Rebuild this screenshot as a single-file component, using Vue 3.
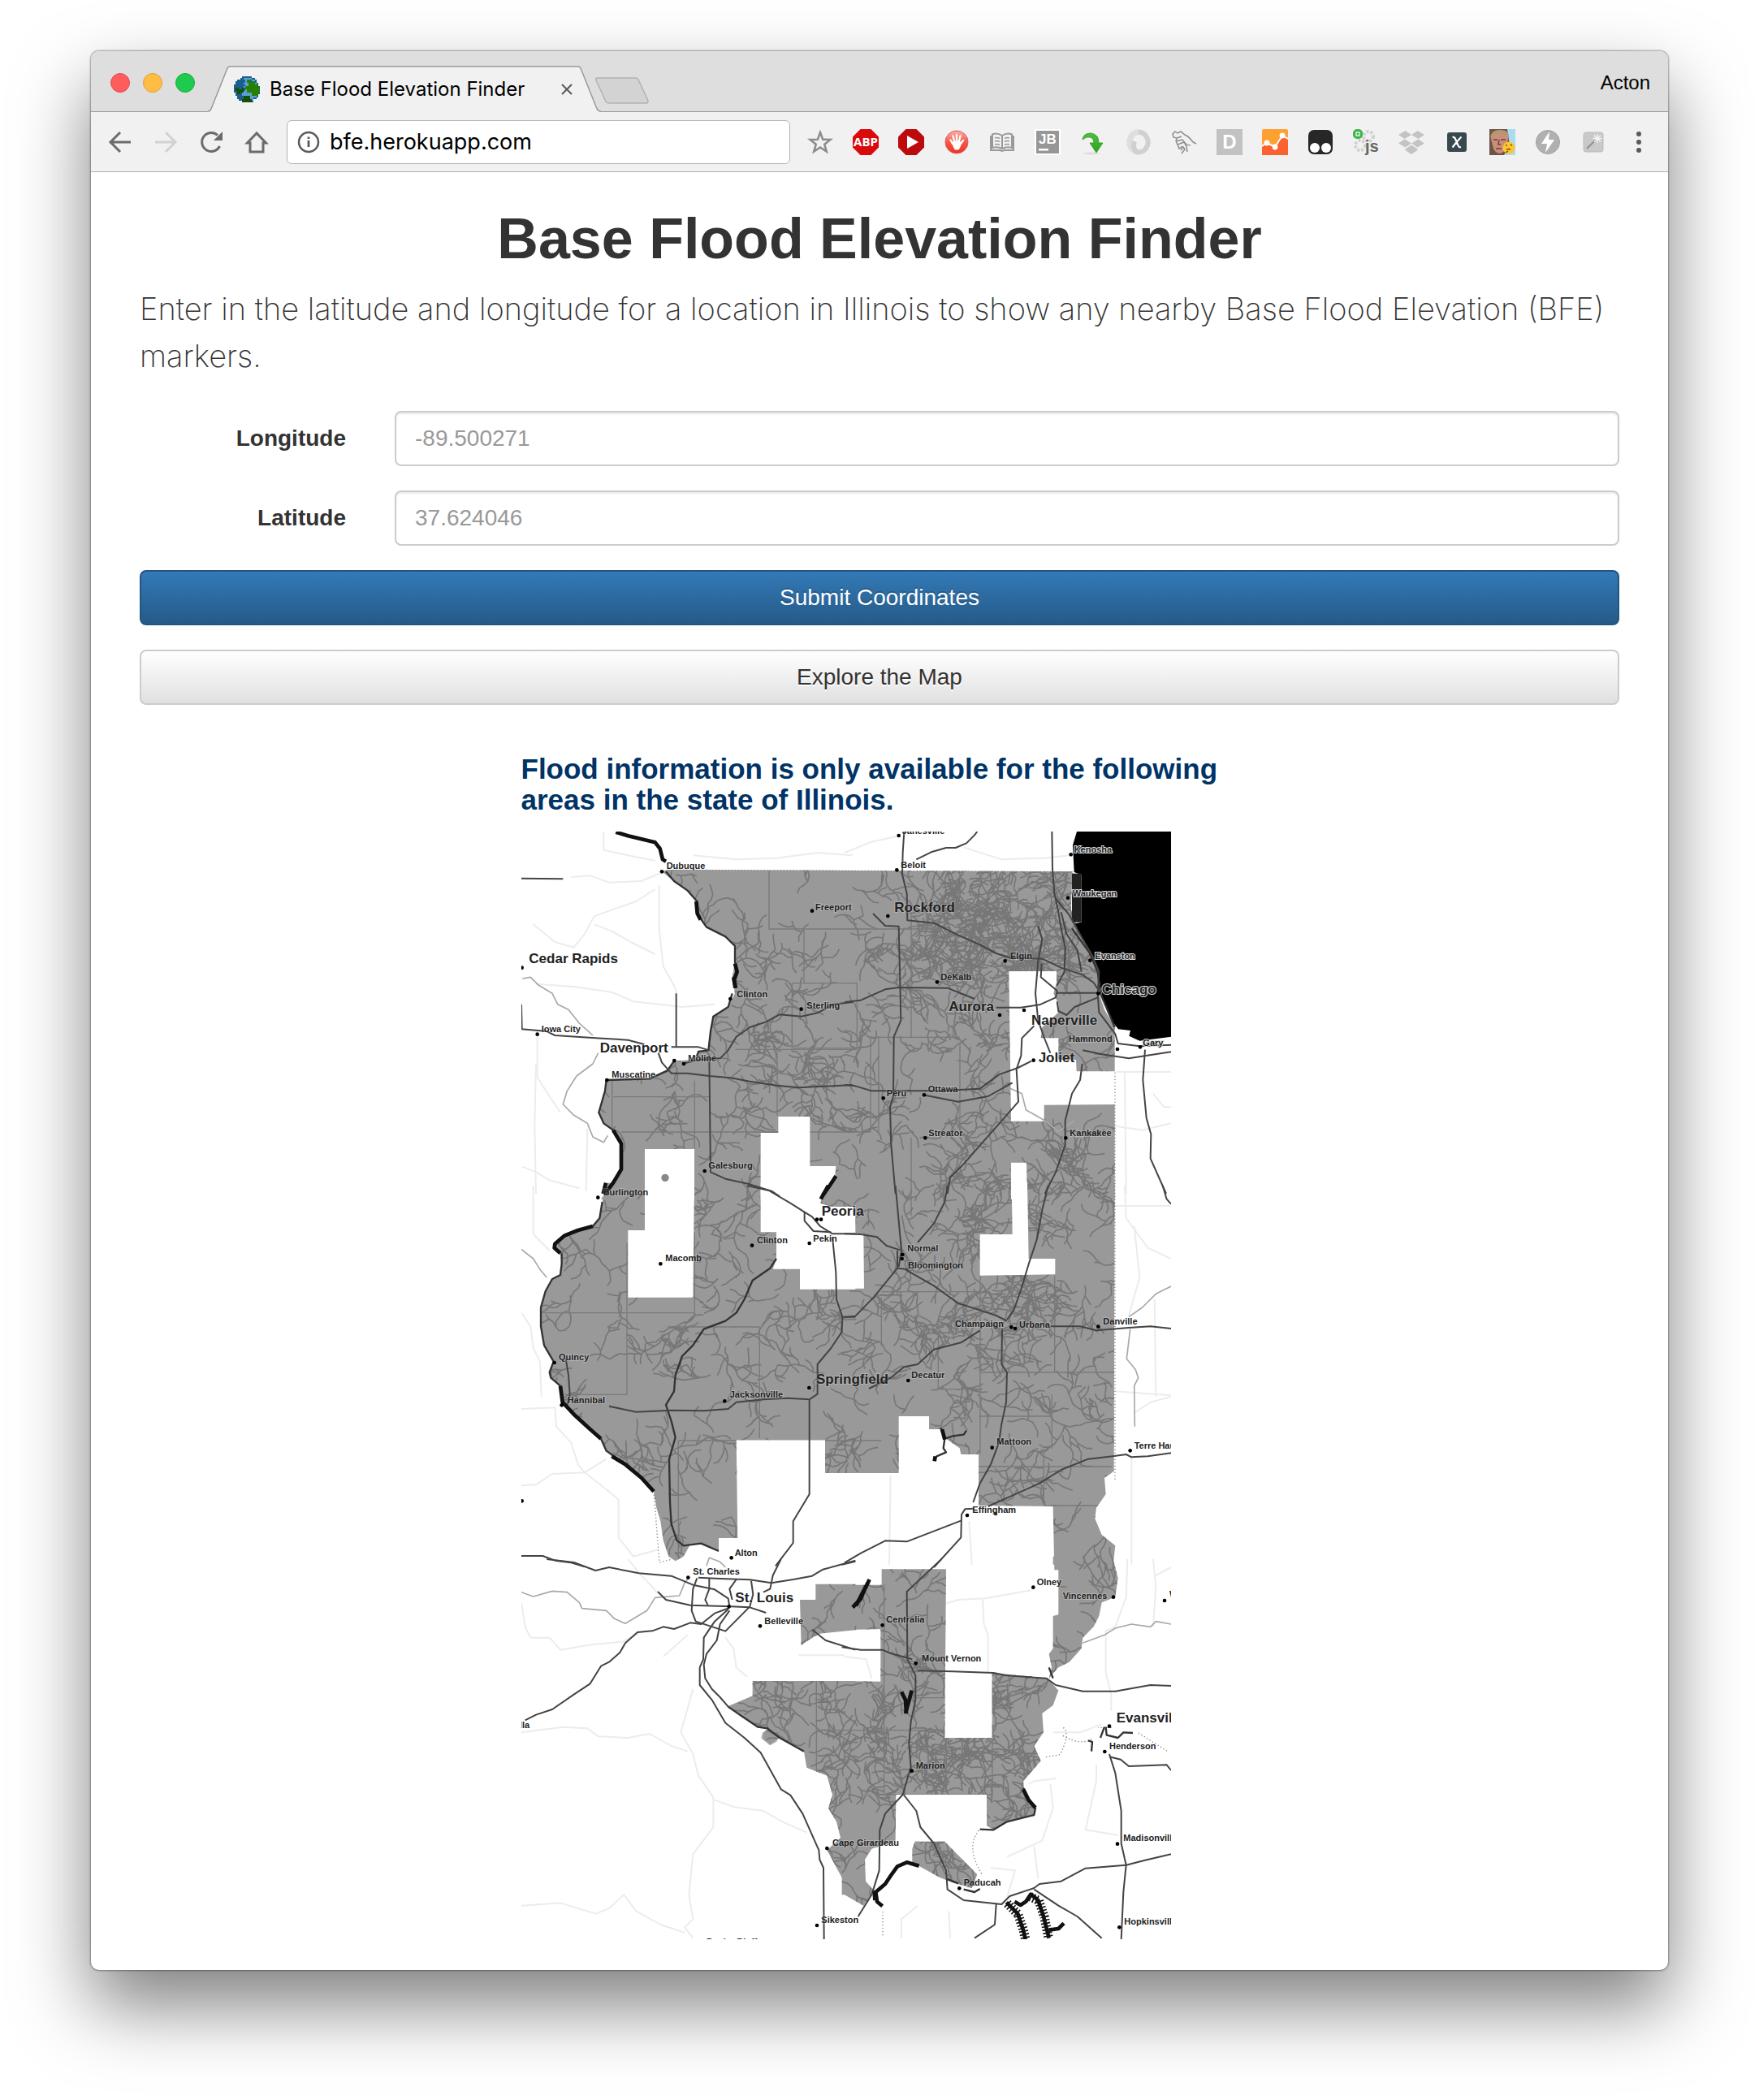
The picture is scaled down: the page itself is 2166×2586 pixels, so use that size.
<script setup>
import { ref } from 'vue'

const address = ref('bfe.herokuapp.com')
const longitude = ref('')
const latitude = ref('')

// The map is drawn as six sheets, each with its own origin.
// A city is [name, x, y, large label, label over the lake].
const sheets = [
  {
    id: 'nw', at: [-6, -42],
    land: ['525,190 545,183 1240,186 1240,1400 300,1400 315,1380 345,1340 375,1290 375,1195 345,1145 310,1120 292,1080 315,1000 320,960 480,955 545,925 570,890 640,885 660,855 697,850 705,780 715,725 770,690 795,640 785,580 795,530 795,465 760,430 690,395 658,350 655,300 620,260 570,225'],
    gaps: ['462,1215 645,1215 645,1400 462,1400', '890,1155 955,1155 955,1095 1072,1095 1072,1278 1168,1278 1165,1310 1120,1380 1110,1400 890,1400'],
    faint: ['190,210 260,205 330,230 450,225 520,195', '515,240 515,400 530,540 575,620 578,640', '500,255 430,300 330,335 275,355 240,420 200,470 130,450 50,385', '275,385 340,410 410,450 500,495', '60,605 200,615 340,635 420,670 600,690 720,680', '310,42 310,110 400,130 500,150', '640,130 800,145 950,140 1100,120 1230,130', '65,800 65,950 110,1020 150,1080', '60,900 55,1130 60,1380', '10,1280 60,1300 110,1330 220,1360', '250,1140 245,1370'],
    stream: ['10,585 40,580 70,610 120,640 140,680 180,700 220,750 270,795', '290,860 270,900 210,945 175,1000 160,1050 200,1090 250,1120 270,1170 310,1190 325,1165'],
    road: ['6,215 160,217', '6,680 8,772 100,780 130,795 280,805 400,812 460,828', '578,640 578,838', '560,838 660,838 700,850', '512,860 525,895 560,935 620,935 700,945 780,952 850,965 950,980 1030,988 1230,978', '700,870 705,1300 760,1325 850,1345 930,1370 960,1390', '600,900 660,885 740,880 770,850 800,800 850,765 910,745 960,718 1040,725 1100,712 1160,680 1230,672'],
    river: ['540,190 570,225 620,260 655,300 658,350 690,395 760,430 795,465 795,530', '785,640 770,690 715,725 705,780 697,850 660,855 655,870', '570,890 545,925 480,955 320,960 315,1000 292,1080 310,1120 345,1145'],
    bold: ['355,44 400,58 500,82 518,105 528,145 540,152', '652,300 656,345 668,368', '795,530 803,560 792,590 798,620', '790,580 796,620', '345,1145 375,1195 375,1290 345,1340 315,1380', '1168,1315 1145,1350 1120,1385'],
    dots: ['525,190', '1080,335', '778,660', '1040,698', '65,791', '322,960', '606,900', '571,888', '683,1296', '8,545'],
    cities: [['Cedar Rapids', 34, 528, 1], ['Dubuque', 542, 181], ['Freeport', 1092, 333], ['Clinton', 802, 653], ['Sterling', 1060, 695], ['Iowa City', 80, 784], ['Davenport', 296, 857, 1], ['Moline', 622, 890], ['Muscatine', 340, 951], ['Galesburg', 697, 1288]]
  },
  {
    id: 'ne', at: [1194, -42],
    land: ['-10,186 842,190 836,330 870,420 905,490 935,560 940,640 960,700 998,765 998,1400 -10,1400'],
    gaps: ['607,558 783,558 783,600 772,640 790,680 788,712 730,765 725,805 790,805 790,885 855,885 857,928 1005,928 1005,1050 737,1052 737,1112 615,1112', '615,1265 672,1265 675,1400 615,1400'],
    faint: ['0,120 100,80 190,60', '440,100 580,145 740,140 830,130', '1000,1130 1100,1145 1206,1120', '1035,930 1040,1380', '1140,1010 1180,1060 1206,1060', '1000,930 1206,930'],
    stream: ['850,1110 790,1150 740,1110 670,1070 655,1010 610,990'],
    road: ['220,42 215,120 213,200 230,270 232,370 330,380 420,425 500,460 560,492 610,508 730,512 800,545 880,572 920,600 940,630', '265,145 320,118 375,102 410,102 450,85 480,55 490,42', '766,42 768,180 775,270 790,340 800,400 815,470 812,560 785,610', '105,345 150,390 200,392 205,600 208,740 182,800 180,1020 168,1060 172,1200 188,1380', '0,672 60,665 150,625 200,618 380,620 480,660', '560,692 650,692 720,682 780,655 785,630 725,580 728,530', '715,390 730,440 715,520 705,640 715,740 740,810 760,860', '785,638 940,638', '935,655 850,690 820,720 790,705 785,670', '700,760 655,805 652,870 635,920 642,1040 590,1100 510,1190 440,1270 390,1320 380,1380', '0,978 40,982 100,1000 350,1000 500,992 570,940 640,915 690,890', '290,1015 420,1040 530,1020 620,970', '878,900 870,960 840,1010 815,1110 815,1200 780,1300 740,1380', '880,850 950,865 1050,880 1206,856', '780,290 830,350 880,440 915,500 940,560 935,640 940,710 1000,790 1010,825 1090,835 1206,830', '800,340 820,420 860,480 875,560', '1110,848 1102,960 1115,1100 1132,1160 1130,1250 1188,1380'],
    river: ['840,400 905,490 935,560 945,640 998,765'],
    bold: [],
    dots: ['200,57', '193,184', '836,127', '825,287', '160,354', '593,520', '907,518', '342,598', '937,640', '573,720', '663,702', '1008,846', '1092,838', '698,887', '143,1027', '294,1015', '298,1174', '817,1174'],
    cities: [['Janesville', 212, 50], ['Beloit', 208, 176], ['Kenosha', 848, 121, 0, 1], ['Waukegan', 842, 281, 0, 1], ['Rockford', 184, 340, 1], ['Elgin', 612, 514], ['Evanston', 925, 512, 0, 1], ['DeKalb', 355, 590], ['Chicago', 950, 643, 1, 1], ['Aurora', 385, 706, 1], ['Naperville', 690, 755, 1], ['Hammond', 828, 820], ['Gary', 1102, 833, 0, 1], ['Joliet', 716, 895, 1], ['Peru', 155, 1020], ['Ottawa', 308, 1006], ['Streator', 310, 1168], ['Kankakee', 832, 1166]]
  },
  {
    id: 'w', at: [-6, 1308],
    land: ['318,-10 305,60 295,120 270,150 215,165 165,185 130,210 125,230 150,250 155,290 150,330 120,345 95,390 78,450 78,520 90,590 125,650 110,690 115,710 150,740 158,800 200,845 260,900 300,935 320,980 390,1030 450,1080 495,1130 505,1190 520,1240 530,1310 550,1370 575,1387 605,1370 630,1325 670,1325 735,1352 735,1302 805,1302 800,940 1128,940 1128,1062 1240,1062 1240,-10'],
    gaps: ['462,-10 645,-10 640,413 400,413 400,165 462,165', '890,-10 1140,-10 1110,65 1150,78 1240,78 1240,383 1035,383 1035,308 935,308 948,270 948,172 890,172'],
    faint: ['50,0 50,180 110,240', '6,470 40,520 50,600 75,650 80,780', '6,825 130,820 135,890 190,950 215,1030 240,1060', '6,1108 60,1105 120,1065 240,1060 320,1010', '240,1060 330,1130 365,1160 365,1300 420,1370 510,1345', '520,60 520,280', '553,310 553,410', '970,235 1050,215 1100,180'],
    stream: ['6,235 50,270 75,310 100,340', '690,1405 700,1375 740,1390 760,1410'],
    road: ['840,0 920,18 1000,65 1052,98 1080,115 1110,150 1155,178 1240,178', '1052,98 1052,130 1085,168 1150,172', '1155,190 1168,320 1170,420 1192,485 1190,540 1150,600 1100,660 1100,770 1070,790 990,785 900,790 800,800 770,825 680,832 560,830 430,836 330,815', '1190,485 1240,485', '1070,790 1070,1140 1010,1240 1010,1320 945,1405', '1190,1400 1240,1388', '6,1368 85,1368 130,1385 190,1393 240,1408', '170,640 180,700 185,770 175,810'],
    river: ['948,270 925,305 860,350 830,420 800,470 760,500 680,530 640,590 600,630 575,700 570,760 540,810 560,870 575,930 552,1010 555,1170 560,1250 580,1310 605,1330 670,1322 735,1350', '155,250 155,290 150,330 120,345 95,390 78,450 78,520 90,590 125,650 110,690 115,710 150,740', '305,60 295,120 270,150', '300,935 320,980 390,1030'],
    bold: ['318,-10 308,30', '270,150 215,165 165,185 130,215 128,230 150,250', '150,740 158,800 200,845 260,900 300,935', '340,1000 390,1030 450,1080 495,1130', '1140,0 1112,50'],
    dots: ['289,44', '858,221', '520,289', '1098,125', '1113,125', '1070,213', '128,654', '155,811', '757,796', '1069,747', '782,1375', '8,1165'],
    cities: [['Burlington', 308, 36], ['Peoria', 1115, 112, 1], ['Clinton', 876, 212], ['Pekin', 1084, 206], ['Macomb', 538, 280], ['Quincy', 144, 644], ['Hannibal', 176, 803], ['Jacksonville', 776, 784], ['Springfield', 1095, 733, 1], ['Alton', 794, 1367]]
  },
  {
    id: 'e', at: [1194, 1308],
    land: ['-10,-10 998,-10 995,1055 960,1080 965,1140 930,1190 925,1230 950,1290 1000,1330 990,1420 775,1420 770,1185 495,1182 495,993 430,993 425,970 375,935 360,900 312,900 312,852 200,852 200,1062 -10,1062'],
    gaps: ['617,-10 675,-10 680,270 778,270 778,328 500,332 500,180 620,180', '-40,78 35,78 35,178 70,178 72,380 -40,380'],
    faint: ['1035,0 1040,120 1120,230 1206,270', '1070,150 1090,340 1050,480', '170,1070 165,1400', '1060,1000 1060,1400', '1000,75 1206,75', '1145,420 1150,780', '1000,760 1206,775', '1070,840 1130,800 1206,780', '460,1240 470,1400'],
    stream: ['1206,372 1150,400 1100,450 1050,485', '1055,530 1042,640 1075,680 1085,710 1070,740 1072,890'],
    road: ['188,0 200,130 210,240 200,300', '380,0 370,60 330,140 270,210', '0,178 60,180 120,190 155,222 205,238', '195,305 110,410 40,482 0,487', '225,310 330,370 420,435 500,460 560,480 600,500', '752,0 730,90 710,200 680,290 650,390 625,460 600,495', '760,520 870,520 930,535 1050,525 1130,520 1206,528', '500,535 430,580 330,605 270,660 220,670 170,710 90,750', '582,530 580,660 600,690 597,800 580,880 570,950 540,1030 500,1100 475,1170', '530,1185 620,1145 720,1100 800,1050 900,1010 990,1000 1040,993 1060,1003 1120,1000 1206,988', '0,1393 60,1358 150,1312 230,1315 430,1238', '480,1193 445,1195 432,1215 430,1300 330,1410', '1175,0 1190,50 1206,68', '195,240 195,305 235,310'],
    river: ['355,895 370,935 365,970 375,985 340,1000 330,1015', '370,935 400,925 440,920 450,905'],
    bold: ['360,900 370,938', '335,1000 332,1018'],
    dots: ['214,255', '212,270', '235,720', '616,523', '630,528', '937,521', '1055,979', '545,968', '453,1218', '558,1212'],
    cities: [['Normal', 232, 243], ['Bloomington', 234, 307], ['Champaign', 408, 522], ['Urbana', 645, 524], ['Danville', 955, 514], ['Decatur', 247, 712], ['Mattoon', 562, 958], ['Terre Haute', 1070, 971], ['Effingham', 472, 1209]]
  },
  {
    id: 'sw', at: [-6, 2688],
    land: ['1035,150 1093,150 1093,92 1240,92 1240,262 1110,275 1080,290 1040,318', '860,450 1240,450 1240,1262 1205,1240 1200,1195 1165,1130 1135,1075 1185,1030 1170,970 1140,920 1155,870 1135,800 1060,770 1050,710 960,660 925,685 897,665 900,640 920,625 880,620 820,580 765,545 860,505'],
    gaps: [],
    faint: ['6,160 20,250 40,290 110,290 150,335 270,315 380,305 440,275', '6,640 160,620 250,625 290,655 400,660 480,645 560,690 620,710', '640,480 615,570 595,640 640,720 660,800 715,880 715,990 640,1090 625,1240 640,1330 610,1360 640,1400', '720,890 790,915 900,930 970,970 1060,1010', '6,1280 150,1270 280,1310 330,1290 385,1240 430,1300 520,1350 610,1380', '760,290 790,330 800,400 840,435', '620,280 530,360', '400,0 440,50 510,125', '1030,355 1200,355'],
    stream: ['6,122 50,138 120,118 175,122 220,160 230,182 320,190 350,220 390,238 470,190 500,142 590,135 610,85 620,75', '900,640 895,660 925,685 950,670'],
    road: ['100,0 200,12 280,42 330,30 440,52 560,62 640,95 720,112 770,145 775,175', '660,68 740,72 850,76 930,88 1010,75 1080,62 1120,38 1240,5', '655,70 640,110 635,190 650,230 760,266 850,175 862,130 855,80', '510,120 540,150 630,170 780,175 850,178 910,198', '965,0 935,60 925,110 900,122', '775,180 720,200 670,240 630,235 570,258 530,250 490,265 435,270 390,310 370,345 330,380 300,395 260,460 200,500 120,555 60,575 20,595', '770,185 720,230 680,290 678,370 665,400 665,465 710,520 760,605 830,660 890,715 965,850 1000,872 1045,940 1105,1075 1108,1110 1122,1140 1124,1405', '775,190 740,240 728,300 690,350 680,390 685,440 710,480 740,510 770,545', '1080,260 1130,300 1240,335', '700,70 700,110 685,150 695,170', '800,75 775,110 785,150'],
    river: ['770,545 820,580 880,620 915,625 960,660 1050,710'],
    bold: [],
    dots: ['622,68', '773,175', '888,247', '1135,1068', '1098,1353'],
    cities: [['St. Charles', 640, 58], ['St. Louis', 796, 160, 1], ['Belleville', 904, 239], ['Cape Girardeau', 1155, 1060], ['Sikeston', 1114, 1345], ['Rolla', -44, 625], ['Poplar Bluff', 690, 1424]]
  },
  {
    id: 'se', at: [1194, 2688],
    land: ['-10,95 137,95 137,37 375,37 370,660 545,660 545,423 600,425 750,440 790,485 770,540 730,570 735,640 700,690 725,745 660,820 665,860 705,920 700,945 600,970 550,1000 525,985 525,870 190,870 188,1040 100,1070 75,1110 78,1190 110,1225 70,1280 0,1240 -10,1240 -10,450 133,452 133,258 -10,262', '770,-10 990,-10 1010,70 1000,140 950,160 940,210 920,250 880,290 875,330 830,380 790,400 755,440 765,400 755,350 770,330 770,210 790,205 790,20 770,20', '260,1043 370,1043 490,1165 470,1215 400,1195 350,1175 250,1120 250,1070'],
    gaps: [],
    faint: ['1045,0 1040,140 1000,250 965,265 965,420 985,500 985,560', '370,165 420,150 520,145 690,115', '510,150 515,240 530,280 530,420', '1140,0 1150,100 1140,250', '1206,30 1150,60', '0,360 80,370 100,440', '930,760 930,820 890,1000 1010,1020', '770,640 870,640 950,610', '780,810 700,820 680,830', '760,830 770,920 730,1040 600,1100', '210,1400 210,1330 270,1280', '390,1400 385,1300', '540,1140 630,1150 600,1250', '700,1060 715,1180'],
    stream: ['880,310 960,280 1000,255 1060,240 1130,250 1150,230 1206,240'],
    road: ['358,0 230,120 232,370 262,430 262,520 245,600 238,680 245,770 235,800 215,870 150,940 130,1000 128,1150 100,1240 50,1320', '-10,325 60,335 140,335 170,348 250,370', '270,412 400,415 550,420 600,430 745,440 780,465 880,488 1000,488 1130,465 1206,468', '218,870 265,930 280,990 330,1050 375,1150 380,1220 440,1260 580,1275 610,1245 700,1215 720,1200 800,1190 890,1142 1040,1130 1110,1112 1206,1090', '560,1275 555,1350 480,1400', '700,1220 790,1280 860,1320 950,1400', '978,720 1000,790 1022,930 1022,1050 1040,1130 1030,1230 1022,1405', '978,730 1020,740 1050,765 1190,760 1206,780'],
    river: ['660,845 680,890 705,920 700,945 600,970 550,1000 500,998', '960,620 945,660', '965,620 968,650 1010,660 1030,640 1065,642', '900,670 915,675 912,710', '375,1180 420,1198', '440,1220 480,1230 500,1218', '770,440 755,400'],
    bold: ['92,75 75,110 60,145 30,178', '86,88 66,125 42,172', '210,490 225,520 228,570', '248,485 236,530 225,570', '275,1133 230,1120 195,1135 170,1170 150,1200 115,1230 120,1265 140,1282', '598,1268 640,1310 660,1370 668,1405', '628,1265 650,1278 670,1265 688,1238 715,1260 735,1320 755,1400', '660,850 680,890 705,918', '755,1370 790,1365 810,1345', '110,1225 112,1260'],
    dots: ['697,104', '993,140', '1182,153', '140,244', '263,385', '978,617', '961,711', '248,782', '1008,1052', '1015,1360', '424,1216'],
    cities: [['Olney', 710, 96], ['Vincennes', 806, 146], ['Washington', 1200, 140], ['Centralia', 154, 234], ['Mount Vernon', 285, 378], ['Evansville', 1004, 602, 1], ['Henderson', 978, 702], ['Marion', 263, 774], ['Madisonville', 1030, 1042], ['Hopkinsville', 1033, 1351], ['Paducah', 440, 1206]]
  }
]

const shift = (s) => `translate(${s.at[0]} ${s.at[1]})`

// Seeded generator, so the creeks are the same on every load.
let seed = 20177
const rnd = () => {
  seed = (seed * 1664525 + 1013904223) % 4294967296
  return seed / 4294967296
}

function creek(x, y, heading, steps, depth) {
  let d = `M${Math.round(x)} ${Math.round(y)}`
  let tail = ''
  for (let i = 0; i < steps; i++) {
    heading += (rnd() - 0.5) * 1.3
    x += Math.cos(heading) * 20
    y += Math.sin(heading) * 20
    d += `L${Math.round(x)} ${Math.round(y)}`
    if (depth && rnd() < 0.32) {
      tail += creek(x, y, heading + (rnd() < 0.5 ? 0.9 : -0.9), 2 + Math.floor(rnd() * 3), depth - 1)
    }
  }
  return d + tail
}

function creeks(n, x, y, w, h) {
  let d = ''
  for (let i = 0; i < n; i++) d += creek(x + rnd() * w, y + rnd() * h, rnd() * 6.28, 4 + Math.floor(rnd() * 8), 2)
  return d
}

const creekPath =
  creeks(620, 60, 120, 2140, 3900) +
  creeks(120, 1400, 140, 650, 420) +
  creeks(50, 1600, 1050, 560, 900) +
  creeks(90, 900, 3100, 1000, 800)

// County borders
const counties = 'M915 144V360H1550M1044 360V560M1000 560H1240V800H1000V560M790 805H1240M945 805V1050M640 920V1170M335 920V1150M340 980H700M370 1110H1290M1290 760V1110M1440 300V760H1620M1320 760V1110M1440 1130V1420M1620 780V1130M1280 760H1620M390 1520V2080M80 1778H640M540 1830H880V2240M130 2080H390M580 2250V2900M580 2250H1330M640 1480V1790M1330 1700H1690M1330 1720V1900M1540 1850V2060H1700M1695 1640V2300M1970 1640V2000M1695 1998H2190M1960 2080V2280M1690 2160H1960M1690 2346H2180M1930 2280V2490M1960 2490H2150M1090 3130V3680M1090 3320H1560M1340 2780V3560M1440 3200H1570M1740 3350V3560M1330 3558H1740M1570 3100V3550'
</script>

<template>
  <div class="desktop">
    <div class="window">
      <header class="titlebar">
        <div class="lights">
          <button class="light red" aria-label="Close"></button>
          <button class="light amber" aria-label="Minimize"></button>
          <button class="light green" aria-label="Zoom"></button>
        </div>
        <div class="tab">
          <svg class="tab-shape" viewBox="0 0 484 57" preserveAspectRatio="none" aria-hidden="true">
            <path d="M0 56.5 Q3 56 4 53 L24 3 Q25 .8 28 .8 H455 Q458 .8 459 3 L479 53 Q481 56 484 56.5 V57 H0Z" fill="#f1f1f1" />
            <path d="M0 56 Q3 56 4 53 L24 3 Q25 .8 28 .8 H455 Q458 .8 459 3 L479 53 Q481 56 484 56" fill="none" stroke="#999" stroke-width="1.5" />
          </svg>
          <svg class="favicon" viewBox="0 0 32 32" aria-hidden="true" shape-rendering="crispEdges">
            <path d="M10 0h12v2h4v2h2v4h2v4h2v10h-2v4h-2v2h-4v4H10v-2H6v-2H4v-4H2v-4H0V10h2V6h2V4h4V2h2z" fill="#19608f" />
            <path d="M12 2h10v2h4v4h2v4h2v8h-2v6h-4v4H14v-6h-4v-6h4v-4h-2V8h2V4h-2z" fill="#5aa0d6" />
            <path d="M16 4h6v2h4v4h4v4h2v6h-2v4h-8v-4h-6v-4h-2v-4h4V8h-2z" fill="#288000" />
            <path d="M2 14h4v2h4v-2h2v6H8v2H4v-4H2zM12 24h8v4h2v4H10v-4h2z" fill="#174f08" />
            <path d="M10 10h4v2h-4zM20 4h2v4h-2z" fill="#19608f" />
          </svg>
          <span class="tab-title">Base Flood Elevation Finder</span>
          <button class="tab-close" aria-label="Close tab">
            <svg viewBox="0 0 14 14"><path d="M1 1L13 13M13 1L1 13" stroke="#5a5a5a" stroke-width="2" /></svg>
          </button>
        </div>
        <button class="new-tab" aria-label="New tab">
          <svg viewBox="0 0 66 33"><path d="M3 1H50Q52 1 53 3L65 29Q65 32 63 32H17Q14 32 13 30L1 4Q0 1 3 1Z" fill="#d3d3d3" stroke="#b2b2b2" stroke-width="1.5" /></svg>
        </button>
        <button class="profile">Acton</button>
      </header>

      <nav class="toolbar">
        <button class="tool" aria-label="Back">
          <svg viewBox="0 0 32 32"><path d="M29 16H5M16 4L4 16L16 28" fill="none" stroke="#6b6b6b" stroke-width="3" /></svg>
        </button>
        <button class="tool" aria-label="Forward" disabled>
          <svg viewBox="0 0 32 32"><path d="M3 16H27M16 4L28 16L16 28" fill="none" stroke="#d2d2d2" stroke-width="3" /></svg>
        </button>
        <button class="tool" aria-label="Reload">
          <svg viewBox="0 0 32 32"><path d="M26.5 21A11.5 11.5 0 1 1 24 7.500" fill="none" stroke="#6b6b6b" stroke-width="3" /><path d="M30 3V14H19Z" fill="#6b6b6b" /></svg>
        </button>
        <button class="tool" aria-label="Home">
          <svg viewBox="0 0 32 32"><path d="M16 5L4.500 17H8V28H24V17H27.500Z" fill="none" stroke="#6b6b6b" stroke-width="3" /></svg>
        </button>

        <div class="address">
          <svg class="info" viewBox="0 0 28 28" aria-hidden="true"><circle cx="14" cy="14" r="12" fill="none" stroke="#5a5a5a" stroke-width="2.500" /><path d="M14 12V20M14 7.500V10" stroke="#5a5a5a" stroke-width="2.800" /></svg>
          <input v-model="address" type="text" aria-label="Address" spellcheck="false" />
        </div>

        <button class="tool" aria-label="Bookmark">
          <svg viewBox="0 0 32 32"><path d="M16 4L19.200 12.700L28.500 13L21.200 18.700L23.800 27.600L16 22.400L8.200 27.600L10.800 18.700L3.500 13L12.800 12.700Z" fill="none" stroke="#8c8c8c" stroke-width="2.500" /></svg>
        </button>
        <button class="tool" aria-label="Ad blocker">
          <svg viewBox="0 0 32 32"><path d="M9.500 0h13L32 9.500v13L22.500 32h-13L0 22.500v-13z" fill="#da0a0c" /><text class="abp" x="16" y="21" text-anchor="middle" font-size="15" font-weight="700" fill="#fff">ABP</text></svg>
        </button>
        <button class="tool" aria-label="Video control">
          <svg viewBox="0 0 32 32"><path d="M9.500 0h13L32 9.500v13L22.500 32h-13L0 22.500v-13z" fill="#bd0a0d" /><path d="M11 8L25 16L11 24Z" fill="#fff" /></svg>
        </button>
        <button class="tool" aria-label="Tracker blocker">
          <svg viewBox="0 0 32 32">
            <defs><linearGradient id="hand-bg" x2="0" y2="1"><stop offset="0" stop-color="#ffb0a8" /><stop offset=".5" stop-color="#fa5548" /><stop offset="1" stop-color="#f0321f" /></linearGradient></defs>
            <circle cx="16" cy="16" r="14" fill="url(#hand-bg)" stroke="#c9665e" />
            <path d="M11 18L8.500 13.500M13 15L11.500 8.500M16 15V7M19 15L20.500 8.500M21 18L24 14" stroke="#fff" stroke-width="2.400" stroke-linecap="round" /><path d="M10.500 16Q16 12 21.500 16Q22 22 18 25.500H14Q11 22 10.500 16Z" fill="#fff" />
          </svg>
        </button>
        <button class="tool" aria-label="Reader">
          <svg viewBox="0 0 32 32" fill="none" stroke="#999" stroke-width="2"><path d="M16 8Q10 4 4 6.500V23Q10 21 16 24Q22 21 28 23V6.500Q22 4 16 8V24M2 8V26H13L16 27L19 26H30V8" /><path d="M7 11Q10 10 13 11.500M7 15Q10 14 13 15.500M7 19Q10 18 13 19.500M19 11.500Q22 10 25 11M19 15.500Q22 14 25 15M19 19.500Q22 18 25 19" stroke-width="1.500" /></svg>
        </button>
        <button class="tool" aria-label="IDE support">
          <svg viewBox="0 0 32 32"><path d="M0 0H32V32H0Z" fill="#fff" /><path d="M2 2H30V30H2Z" fill="#979797" /><text x="5" y="18" font-size="17" font-weight="700" fill="#fff">JB</text><path d="M5 24H17V26.500H5Z" fill="#fff" /></svg>
        </button>
        <button class="tool" aria-label="Downloader">
          <svg viewBox="0 0 32 32">
            <defs><linearGradient id="arrow-bg" x2="0" y2="1"><stop offset="0" stop-color="#4fc043" /><stop offset="1" stop-color="#2aa51b" /></linearGradient></defs>
            <ellipse cx="14" cy="30" rx="10" ry="1.500" fill="#ddd" />
            <path d="M3 13Q4 5 13 5Q23 6 23 17H28L20 29L12 17H17Q17 11 12 10Q7 9 3 13Z" fill="url(#arrow-bg)" stroke="#2c9420" stroke-width=".8" />
          </svg>
        </button>
        <button class="tool" aria-label="JSON viewer">
          <svg viewBox="0 0 32 32" fill="none" stroke-width="6"><path d="M16 3.500C6 4 2 16 7 23C10 27 13 28.500 16 28.500" stroke="#dedede" stroke-width="7" /><path d="M16 3.500C26 4 31 16 25 24C22 28 18 28.500 16 28.500C10 28 9 20 11 15" stroke="#d0d0d0" /></svg>
        </button>
        <button class="tool" aria-label="Annotate">
          <svg viewBox="0 0 32 32" fill="none" stroke="#8c8c8c" stroke-width="1.500"><path d="M31 18L27 16Q22 9 17 7L12 3L8 5L5 3L2 6L3 10L7 11L6 15M7 11L13 9M6 15L14 13M6 15L8 19M8 19L16 16M14 13L18 18Q21 20 24 20M8 19L10 24L14 21M12 26L15 22L17 25L13 30M16 16L19 21L20 28" /></svg>
        </button>
        <button class="tool" aria-label="Dictionary">
          <svg viewBox="0 0 32 32"><path d="M0 0H32V32H0Z" fill="#c2c2c2" /><text x="16" y="24" text-anchor="middle" font-size="24" font-weight="700" fill="#fff">D</text></svg>
        </button>
        <button class="tool" aria-label="Analytics">
          <svg viewBox="0 0 32 32"><rect width="32" height="32" rx="2" fill="#ffa033" /><path d="M0 20L6 17L16 22L25 8L32 12V32H0Z" fill="#fb6230" /><path d="M0 21L6 17L16 22L25 8L32 12" fill="none" stroke="#fff" stroke-width="2" /><circle cx="6" cy="17" r="3.400" fill="#fff" /><circle cx="16" cy="22" r="3.400" fill="#fff" /><circle cx="25" cy="8" r="3.400" fill="#fff" /></svg>
        </button>
        <button class="tool" aria-label="User scripts">
          <svg viewBox="0 0 32 32"><rect x="1" y="1" width="30" height="30" rx="7" fill="#272727" /><circle cx="9" cy="23" r="6" fill="#fff" /><circle cx="23" cy="23" r="6" fill="#fff" /></svg>
        </button>
        <button class="tool" aria-label="Script toggle">
          <svg viewBox="0 0 32 32"><circle cx="19" cy="9" r="6" fill="none" stroke="#d0d0d0" stroke-width="4" stroke-dasharray="3 2" /><circle cx="9" cy="20" r="6" fill="none" stroke="#d0d0d0" stroke-width="4" stroke-dasharray="3 2" /><rect x="0" y="0" width="12" height="12" rx="5" fill="#3fb54d" /><rect x="4" y="4" width="4" height="4" fill="none" stroke="#d9f3db" stroke-width="1.500" /><text x="15" y="28" font-size="20" font-weight="700" fill="#666">js</text></svg>
        </button>
        <button class="tool" aria-label="Dropbox">
          <svg viewBox="0 0 32 32" fill="#c3c3c3"><path d="M8.500 2L16 7L7.500 12L0 7ZM23.500 2L32 7L24.500 12L16 7ZM0 17.500L7.500 12.500L16 17.500L8.500 22.500ZM32 17.500L24.500 12.500L16 17.500L23.500 22.500ZM8.500 24.500L16 19.500L23.500 24.500V26L16 31L8.500 26Z" /></svg>
        </button>
        <button class="tool" aria-label="XPath helper">
          <svg viewBox="0 0 32 32"><rect x="4" y="4" width="24" height="24" rx="3" fill="#37494f" /><path d="M10.500 10Q13 9 14.500 13L17.500 20Q18.500 23 21 22M21.500 9.500Q16 15 10.500 22.500" fill="none" stroke="#fff" stroke-width="2.200" /></svg>
        </button>
        <button class="tool" aria-label="Photo replacer">
          <svg viewBox="0 0 32 32">
            <path d="M0 0H32V32H0Z" fill="#a9dcf2" /><path d="M0 0H22L25 20L18 32H0Z" fill="#6b5546" /><path d="M2 12Q1 4 9 3H19Q24 5 23 12L21 22Q18 30 12 30Q5 28 4 20Z" fill="#c98f79" /><path d="M1 11Q2 1 12 1Q24 0 24 10Q20 5 12 6Q4 6 1 11Z" fill="#b99672" />
            <path d="M5 13H10M14 13H20M12 13L11 19H14M8 24H15" stroke="#6d4237" stroke-width="1.500" fill="none" />
            <circle cx="24" cy="23" r="7.500" fill="#fdc62f" /><path d="M20 20H22M26 19L28 20M21 25Q24 24 26 25M20 29L23 27" stroke="#7a4a12" stroke-width="1.500" fill="none" />
          </svg>
        </button>
        <button class="tool" aria-label="Page speed">
          <svg viewBox="0 0 32 32"><circle cx="16" cy="16" r="14.500" fill="#b0b0b0" stroke="#a0a0a0" /><path d="M18 3L8 18H15L13 29L24 13H17Z" fill="#fff" /></svg>
        </button>
        <button class="tool" aria-label="Magic wand">
          <svg viewBox="0 0 32 32"><rect x="4" y="4" width="24" height="24" rx="3" fill="#c9c9c9" stroke="#bbb" /><path d="M8 24L19 13" stroke="#8f8f8f" stroke-width="2" /><path d="M21 6V17M15.500 11.500H26.500M17 7.500L25 15.500M25 7.500L17 15.500" stroke="#f5f5f5" stroke-width="1.300" /></svg>
        </button>
        <button class="tool" aria-label="Menu">
          <svg viewBox="0 0 32 32" fill="#5a5a5a"><circle cx="16" cy="6" r="3" /><circle cx="16" cy="16" r="3" /><circle cx="16" cy="26" r="3" /></svg>
        </button>
      </nav>

      <main class="page">
        <h1>Base Flood Elevation Finder</h1>
        <p class="lead">Enter in the latitude and longitude for a location in Illinois to show any nearby Base Flood Elevation (BFE) markers.</p>

        <form class="form" @submit.prevent>
          <div class="row">
            <label for="longitude">Longitude</label>
            <input id="longitude" v-model="longitude" type="text" placeholder="-89.500271" />
          </div>
          <div class="row">
            <label for="latitude">Latitude</label>
            <input id="latitude" v-model="latitude" type="text" placeholder="37.624046" />
          </div>
          <button class="btn primary" type="submit">Submit Coordinates</button>
          <button class="btn plain" type="button">Explore the Map</button>
        </form>

        <section class="coverage">
          <h2>Flood information is only available for the following areas in the state of Illinois.</h2>
          <svg class="map" viewBox="0 0 2400 4092" role="img" aria-label="Map of Illinois">
            <defs>
              <clipPath id="land">
                <template v-for="s in sheets" :key="s.id">
                  <polygon v-for="(p, i) in s.land" :key="i" :points="p" :transform="shift(s)" />
                </template>
              </clipPath>
            </defs>
            <g v-for="s in sheets" :key="s.id" :transform="shift(s)">
              <polyline v-for="(p, i) in s.faint" :key="i" class="faint" :points="p" />
            </g>
            <g v-for="s in sheets" :key="s.id" :transform="shift(s)">
              <polygon v-for="(p, i) in s.land" :key="i" class="land" :points="p" />
            </g>
            <g clip-path="url(#land)">
              <path class="creek" :d="creekPath" />
              <path class="county" :d="counties" />
            </g>
            <g v-for="s in sheets" :key="s.id" :transform="shift(s)">
              <polygon v-for="(p, i) in s.gaps" :key="i" class="gap" :points="p" />
            </g>
            <path class="lake" d="M2052 0L2037 50L2042 150L2069 160V335L2045 340L2060 370L2099 448L2126 500L2146 610L2180 698L2205 730L2250 735L2245 755L2284 773L2400 758V0Z" />
            <path class="shore" d="M2034 155H2069V335H2034Z" />
            <path class="dotted" d="M560 142L2036 149M2193 890V2400M2002 3310Q2030 3330 1990 3410L1930 3420M2000 3340Q2070 3380 2110 3350M2180 3310H2130M1690 3690Q1640 3750 1700 3850M1335 3990V4080M490 2450L510 2700L550 2690M2280 3330L2390 3400" />
            <circle class="pond" cx="531" cy="1279" r="14" />
            <g v-for="s in sheets" :key="s.id" :transform="shift(s)">
              <polyline v-for="(p, i) in s.stream" :key="'s' + i" class="stream" :points="p" />
              <polyline v-for="(p, i) in s.river" :key="'r' + i" class="river" :points="p" />
              <polyline v-for="(p, i) in s.road" :key="'h' + i" class="road" :points="p" />
              <polyline v-for="(p, i) in s.bold" :key="'b' + i" class="bold" :points="p" />
            </g>
            <path class="teeth" d="M1795 3960L1835 4000L1855 4060L1862 4092M1880 3935L1912 3950L1932 4010L1948 4090" />
            <g v-for="s in sheets" :key="s.id" :transform="shift(s)">
              <circle v-for="(p, i) in s.dots" :key="i" :cx="p.split(',')[0]" :cy="p.split(',')[1]" r="7" />
              <text v-for="(c, i) in s.cities" :key="'c' + i" class="city" :class="{ major: c[3], coastal: c[4] }" :x="c[1]" :y="c[2]">{{ c[0] }}</text>
            </g>
          </svg>
        </section>
      </main>
    </div>
  </div>
</template>

<style>
body {
  margin: 0;
  background: #fff;
}
</style>

<style scoped>
* {
  box-sizing: border-box;
}
.desktop {
  padding: 63px 112px 160px;
  overflow: hidden;
  font-family: "Liberation Sans", Arial, sans-serif;
  color: #333;
}
button {
  font-family: inherit;
  padding: 0;
  border: 0;
  background: none;
}
svg {
  display: block;
}
.window {
  border-radius: 10px;
  background: #fff;
  box-shadow: 0 0 2px 1px rgba(0, 0, 0, 0.35), 0 44px 90px rgba(0, 0, 0, 0.5);
}
.titlebar {
  display: flex;
  align-items: flex-end;
  height: 75px;
  background: #dedede;
  border-bottom: 1px solid #999;
  border-radius: 10px 10px 0 0;
}
.lights {
  display: flex;
  gap: 16px;
  align-self: center;
  padding: 4px 16px 0 24px;
}
.light {
  width: 24px;
  height: 24px;
  border-radius: 50%;
}
.red {
  background: #ff5c5c;
  border: 1px solid #e24b4b;
}
.amber {
  background: #ffbd44;
  border: 1px solid #dfa033;
}
.green {
  background: #1ecb4f;
  border: 1px solid #14ae3e;
}
.tab {
  position: relative;
  display: flex;
  align-items: center;
  width: 484px;
  height: 57px;
  margin-bottom: -1px;
  padding: 0 35px 0 32px;
}
.tab-shape {
  position: absolute;
  inset: 0;
  width: 100%;
  height: 100%;
}
.favicon {
  position: relative;
  width: 32px;
  height: 32px;
  margin-right: 12px;
}
.tab-title {
  position: relative;
  flex: 1;
  white-space: nowrap;
  font-family: Inter, sans-serif;
  font-size: 24px;
  color: #000;
}
.tab-close {
  position: relative;
  width: 14px;
  height: 14px;
}
.new-tab {
  width: 66px;
  height: 33px;
  margin: 0 auto 9px -7px;
}
.profile {
  align-self: center;
  padding: 4px 22px 0 0;
  font-size: 24px;
  color: #000;
}
.toolbar {
  display: flex;
  align-items: center;
  height: 74px;
  padding: 0 8px;
  background: #f1f1f1;
  border-bottom: 1px solid #b0b0b0;
}
.tool {
  display: flex;
  justify-content: center;
  flex: 0 0 56px;
}
.tool svg {
  width: 32px;
  height: 32px;
}
.abp {
  font-family: "Open Sans", sans-serif;
}
.address {
  display: flex;
  align-items: center;
  flex: 1;
  min-width: 0;
  height: 54px;
  margin: 0 9px;
  padding-left: 12px;
  background: #fff;
  border: 1px solid #b4b4b4;
  border-radius: 6px;
}
.info {
  width: 28px;
  height: 28px;
  margin-right: 12px;
}
.address input {
  flex: 1;
  min-width: 0;
  padding: 0;
  border: 0;
  outline: 0;
  background: none;
  font-family: Inter, sans-serif;
  font-size: 27px;
  color: #000;
}
.page {
  padding: 42px 60px 38px;
}
h1 {
  margin: 0 0 17px;
  text-align: center;
  font-size: 70px;
  line-height: 80px;
}
.lead {
  margin: 0 0 39px;
  font-family: Inter, sans-serif;
  font-weight: 200;
  font-size: 38px;
  line-height: 58px;
}
.form {
  display: flex;
  flex-direction: column;
  gap: 30px;
}
.row {
  display: flex;
  align-items: center;
}
.row label {
  width: 314px;
  padding-right: 60px;
  text-align: right;
  font-size: 28px;
  font-weight: 700;
}
.row input {
  flex: 1;
  min-width: 0;
  height: 68px;
  padding: 0 23px;
  border: 2px solid #ccc;
  border-radius: 8px;
  box-shadow: inset 0 2px 2px rgba(0, 0, 0, 0.08);
  font-family: inherit;
  font-size: 28px;
  color: #555;
}
.row input::placeholder {
  color: #999;
  opacity: 1;
}
.btn {
  height: 68px;
  border: 2px solid;
  border-radius: 8px;
  font-size: 28px;
}
.primary {
  background: linear-gradient(#337ab7, #265a88);
  border-color: #245580;
  color: #fff;
  text-shadow: 0 -2px 0 rgba(0, 0, 0, 0.2);
}
.plain {
  background: linear-gradient(#fff, #e0e0e0);
  border-color: #ccc;
  color: #333;
  text-shadow: 0 2px 0 #fff;
}
.coverage {
  width: 50%;
  margin: 60px auto 0;
  padding-left: 14px;
}
h2 {
  margin: 0 0 20px;
  font-size: 35px;
  line-height: 38px;
  color: #036;
}
.map {
  width: 100%;
  max-width: 800px;
}
.map polyline,
.map path {
  fill: none;
  stroke-linejoin: round;
}
.map .faint {
  stroke: #ececec;
  stroke-width: 6;
}
.map .land {
  fill: #999;
}
.map .gap {
  fill: #fff;
}
.map .creek {
  stroke: #777;
  stroke-width: 5;
}
.map .county {
  stroke: #7a7a7a;
  stroke-width: 4;
}
.map .lake {
  fill: #000;
}
.map .shore {
  fill: #222;
}
.map .pond {
  fill: #888;
}
.map .dotted {
  stroke: #888;
  stroke-width: 4;
  stroke-dasharray: 4 8;
}
.map .stream {
  stroke: #a8a8a8;
  stroke-width: 5;
}
.map .river {
  stroke: #333;
  stroke-width: 7;
}
.map .road {
  stroke: #444;
  stroke-width: 6;
}
.map .bold {
  stroke: #111;
  stroke-width: 14;
}
.map .teeth {
  stroke: #111;
  stroke-width: 34;
  stroke-dasharray: 5 7;
}
.city {
  font-size: 33px;
  font-weight: 700;
  fill: #222;
  stroke: rgba(255, 255, 255, 0.25);
  stroke-width: 6;
  paint-order: stroke;
}
.major {
  font-size: 51px;
}
.coastal {
  stroke: #ddd;
}
</style>
